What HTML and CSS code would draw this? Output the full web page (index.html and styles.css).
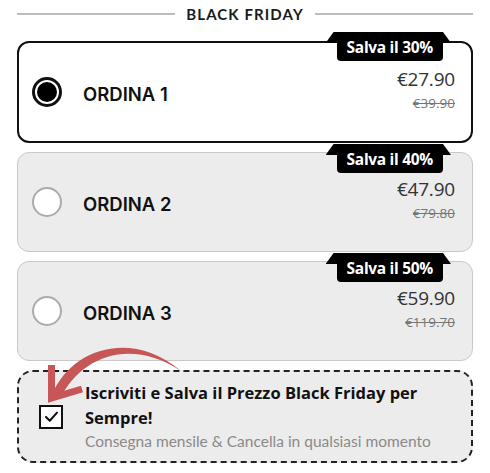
FILE: index.html
```html
<!DOCTYPE html>
<html lang="it">
<head>
<meta charset="utf-8">
<title>Black Friday</title>
<link rel="stylesheet" href="styles.css">
</head>
<body>
<div class="page">
  <div class="title">
    <span class="rule"></span>
    <span class="title-text">BLACK FRIDAY</span>
    <span class="rule"></span>
  </div>
  <div class="options">
    <div class="option selected">
      <span class="badge">Salva il 30%</span>
      <span class="radio"></span>
      <span class="label">ORDINA 1</span>
      <div class="price"><span class="now">€27.90</span><span class="was">€39.90</span></div>
    </div>
    <div class="option">
      <span class="badge">Salva il 40%</span>
      <span class="radio"></span>
      <span class="label">ORDINA 2</span>
      <div class="price"><span class="now">€47.90</span><span class="was">€79.80</span></div>
    </div>
    <div class="option">
      <span class="badge">Salva il 50%</span>
      <span class="radio"></span>
      <span class="label">ORDINA 3</span>
      <div class="price"><span class="now">€59.90</span><span class="was">€119.70</span></div>
    </div>
    <div class="subscribe">
      <span class="checkbox">
        <svg viewBox="0 0 20 20" width="17" height="17"><path d="M3.5 10.5 L8 15 L16.5 5.5" fill="none" stroke="#111" stroke-width="2.4" stroke-linecap="round" stroke-linejoin="round"/></svg>
      </span>
      <div class="sub-text">
        <div class="sub-title">Iscriviti e Salva il Prezzo Black Friday per Sempre!</div>
        <div class="sub-note">Consegna mensile &amp; Cancella in qualsiasi momento</div>
      </div>
    </div>
  </div>
  <svg class="arrow" viewBox="40 338 150 70" width="150" height="70">
    <path d="M52 395 C70 350, 130 328, 181 371 C130 337, 80 357, 60 399 Z" fill="#c75656"/>
    <path d="M51.5 365 L51.5 398 L82 389" fill="none" stroke="#c75656" stroke-width="7" stroke-linejoin="miter"/>
  </svg>
</div>
</body>
</html>
```
FILE: styles.css
```css
* { box-sizing: border-box; }
html, body { margin: 0; padding: 0; background: #fff; }
body { font-family: "Lato", "Liberation Sans", sans-serif; color: #111; }

.page {
  position: relative;
  width: 490px;
  height: 473px;
  padding: 0 17px 0 17px;
}

.title {
  display: flex;
  align-items: center;
  gap: 11px;
  height: 28px;
}
.rule { flex: 1; height: 2px; background: #bdbdbd; }
.title-text {
  font-weight: 700;
  font-size: 15px;
  letter-spacing: 1.1px;
  color: #1a1a1a;
}

.options {
  display: flex;
  flex-direction: column;
  gap: 9px;
  margin-top: 13px;
}

.option {
  position: relative;
  display: flex;
  align-items: center;
  height: 100px;
  padding: 0 17px 0 14px;
  background: #ececec;
  border: 1px solid #c9c9c9;
  border-radius: 12px;
}
.option.selected {
  height: 102px;
  background: #fff;
  border: 2px solid #111;
  padding-left: 13px;
  padding-right: 16px;
}

.badge {
  position: absolute;
  top: -9px;
  right: 29px;
  height: 29px;
  padding: 0 10px 0 10px;
  background: #000;
  color: #fff;
  font-family: "Open Sans", "Liberation Sans", sans-serif;
  font-weight: 700;
  font-size: 15.5px;
  letter-spacing: -0.3px;
  line-height: 30px;
  border-radius: 0 0 4px 4px;
  isolation: isolate;
}
.option.selected .badge { top: -11px; right: 28px; }
.badge::before {
  content: "";
  position: absolute;
  z-index: -1;
  top: 0;
  left: -11px;
  right: -8px;
  height: 11px;
  background: #000;
  clip-path: polygon(8px 0, calc(100% - 8px) 0, 100% 100%, 0 100%);
}

.radio {
  flex: none;
  width: 30px;
  height: 30px;
  border-radius: 50%;
  background: #fff;
  border: 2px solid #ababab;
}
.selected .radio {
  border: 3px solid #111;
  padding: 2px;
  background: #fff;
}
.selected .radio::after {
  content: "";
  display: block;
  width: 100%;
  height: 100%;
  border-radius: 50%;
  background: #000;
}

.label {
  margin-left: 21px;
  margin-top: 4px;
  font-family: "Inter", "Liberation Sans", sans-serif;
  font-weight: 600;
  font-size: 18.5px;
  color: #111;
  flex: 1;
}

.price {
  display: flex;
  flex-direction: column;
  align-items: flex-end;
  margin-top: -4px;
  font-family: "Open Sans", "Liberation Sans", sans-serif;
}
.now { font-size: 19px; color: #333; line-height: 26px; letter-spacing: -0.2px; }
.was { font-size: 13.5px; color: #777; text-decoration: line-through; line-height: 22px; }

.subscribe {
  display: flex;
  align-items: center;
  height: 93px;
  padding: 0 18px 0 20px;
  background: #ececec;
  border: 2px dashed #222;
  border-radius: 16px;
}
.checkbox {
  flex: none;
  display: flex;
  align-items: center;
  justify-content: center;
  width: 24px;
  height: 24px;
  background: #fff;
  border: 2px solid #111;
}
.sub-text { margin-left: 22px; }
.sub-title {
  font-family: "Open Sans", "Liberation Sans", sans-serif;
  font-weight: 700;
  font-size: 16.5px;
  letter-spacing: 0;
  line-height: 25px;
  color: #111;
}
.sub-note {
  font-size: 15.5px;
  line-height: 23px;
  color: #8a8a8a;
}

.arrow {
  position: absolute;
  left: 40px;
  top: 338px;
  overflow: visible;
}
```
